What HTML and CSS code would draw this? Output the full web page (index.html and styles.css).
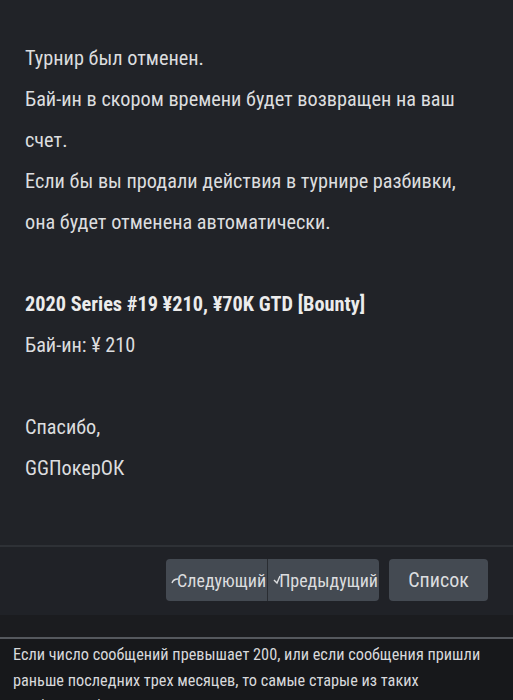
FILE: index.html
```html
<!DOCTYPE html>
<html lang="ru">
<head>
<meta charset="UTF-8">
<meta name="viewport" content="width=device-width, initial-scale=1.0">
<title>message</title>
<link rel="stylesheet" href="styles.css">
</head>
<body>
<div class="message">
  <p>Турнир был отменен.</p>
  <p>Бай-ин в скором времени будет возвращен на ваш счет.</p>
  <p>Если бы вы продали действия в турнире разбивки, она будет отменена автоматически.</p>
  <p class="blank"></p>
  <p class="title">2020 Series #19 ¥210, ¥70K GTD [Bounty]</p>
  <p>Бай-ин: ¥ 210</p>
  <p class="blank"></p>
  <p>Спасибо,</p>
  <p>GGПокерОК</p>
</div>
<div class="actions">
  <div class="btn-group">
    <button class="btn btn-small">
      <svg class="ico" viewBox="0 0 10 10"><path d="M1 8 C2 5 4 4 7 4"/></svg>Следующий
    </button>
    <button class="btn btn-small">
      <svg class="ico" viewBox="0 0 10 10"><path d="M1 5 L4 8 L7 1"/></svg>Предыдущий
    </button>
  </div>
  <button class="btn btn-list">Список</button>
</div>
<div class="gap"></div>
<div class="notice">
  Если число сообщений превышает 200, или если сообщения пришли раньше последних трех месяцев, то самые старые из таких сообщений будут удалены.
</div>
</body>
</html>
```

FILE: styles.css
```css
html,
body {
  margin: 0;
  padding: 0;
  background: #17181b;
}
body {
  font-family: Roboto, "Liberation Sans", sans-serif;
  font-stretch: condensed;
  color: #dcdddf;
  overflow: hidden;
}
.message {
  background: #212328;
  padding: 38px 38px 56px 25px;
  border-bottom: 2px solid #2e3136;
}
.message p {
  margin: 0;
  font-size: 20.3px;
  line-height: 41px;
}
.message .blank {
  height: 41px;
}
.message .title {
  font-weight: 700;
  color: #ececec;
}
.actions {
  display: flex;
  justify-content: flex-end;
  align-items: center;
  gap: 10px;
  padding: 12px 25px 14px;
  background: #202227;
}
.btn {
  border: 0;
  background: #444a52;
  color: #dcdddf;
  font-family: inherit;
  font-stretch: condensed;
  height: 42px;
  border-radius: 4px;
  padding: 0;
  display: flex;
  align-items: center;
}
.btn-group {
  display: flex;
  border-radius: 4px;
  overflow: hidden;
}
.btn-group .btn {
  border-radius: 0;
}
.btn-group .btn + .btn {
  border-left: 1px solid #2a2d32;
}
.btn-small {
  font-size: 18px;
  padding: 0 1px 0 5px;
}
.ico {
  width: 10px;
  height: 10px;
  margin-right: -4px;
  fill: none;
  stroke: #dcdddf;
  stroke-width: 1.4;
}
.btn-list {
  font-size: 20px;
  width: 99px;
  justify-content: center;
}
.gap {
  height: 22px;
  background: #1b1c1f;
  border-bottom: 2px solid #55585d;
}
.notice {
  padding: 3px 22px 0 13px;
  font-size: 16.3px;
  line-height: 26px;
  color: #d8d9db;
}
```
